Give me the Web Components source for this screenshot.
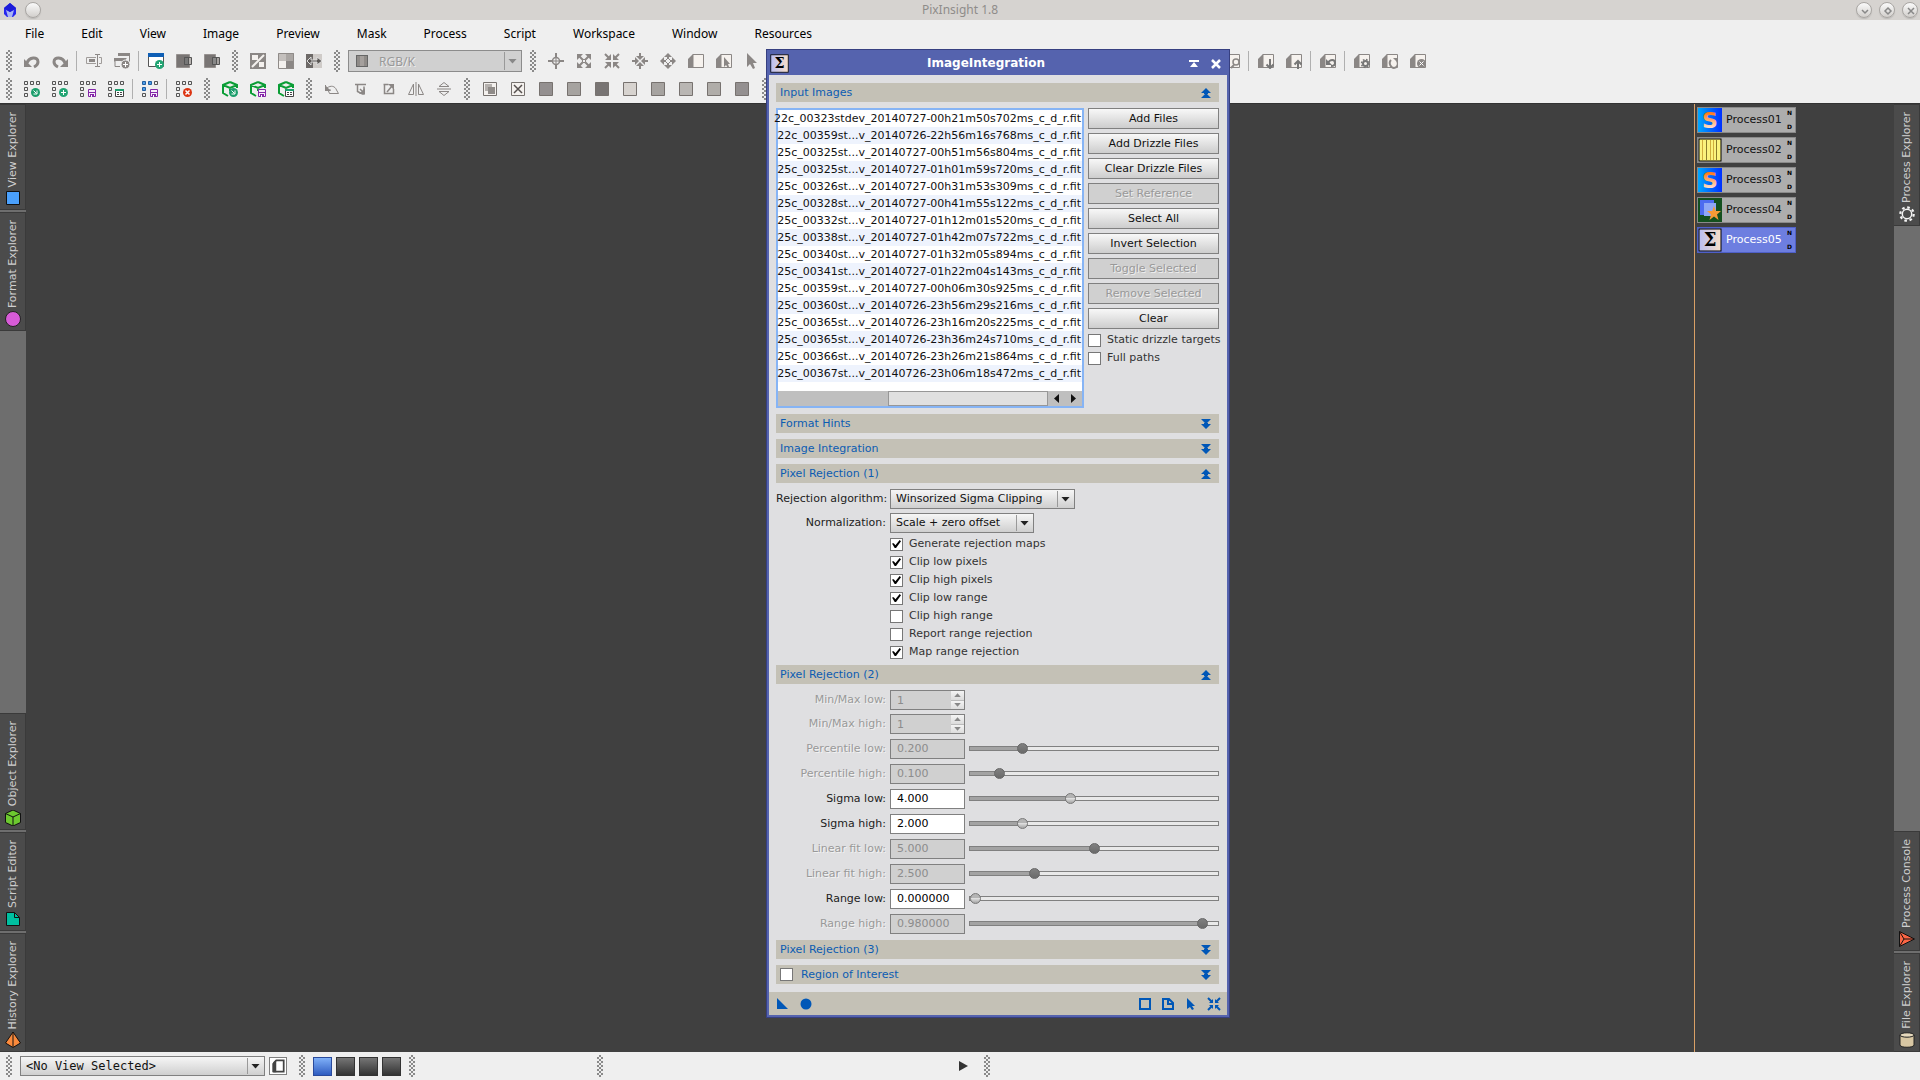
<!DOCTYPE html>
<html lang="en">
<head>
<meta charset="utf-8">
<title>PixInsight 1.8</title>
<style>
  body {
    margin: 0;
    font: 11px/14px "DejaVu Sans", sans-serif;
    color: #111;
    background: #404040;
  }
</style>
</head>
<body>
<pix-app></pix-app>

<script>
const GREY = '#8b8785';

// window with a cut corner, base of the preview tools
const page = `<path d="M5 1.500h10.500v13H5z" fill="#f6f2ee" stroke="${GREY}"/><path d="M0 6 5 1v14H0z" fill="${GREY}"/>`;
// rows of small squares, base of the icon set tools
const grid = (c = '#efefef', s = '#555') => `<g fill="${c}" stroke="${s}">
  <path d="M.5.5h3v3h-3zM6.500.5h3v3h-3zM.5 6.500h3v3h-3z"/></g>
  <g fill="#efefef" stroke="#555"><path d="M12.500.5h3v3h-3zM.5 12.500h3v3h-3z"/></g>`;
const cube = '<path d="M8 1 1 4v8l5 3M8 1l7 3v3M1 4l7 3 7-3M8 7v3" fill="none" stroke="#0a9d35" stroke-width="2"/>';
const badgeGo = '<circle cx="11.500" cy="11.500" r="4.500" fill="#1c9e6c"/><path d="m9.500 9.500 3 3m.5-3v3.500H9.500" stroke="#fff" fill="none"/>';
const badgeAdd = '<circle cx="11.500" cy="11.500" r="4.500" fill="#22a573"/><path d="M11.500 9v5M9 11.500h5" stroke="#fff"/>';
const badgeSave = '<path d="M8.500 8.500h7v7h-7z" fill="#f6eefa" stroke="#8427a8"/><path d="M8 11h8v1H8zM10 13h4v3h-4z" fill="#8427a8"/><path d="M11 14h1v2h-1z" fill="#fff"/>';
const badgeList = '<path d="M7.500 8.500h8v7h-8z" fill="#fff" stroke="#444"/><path d="M7 8h9v2H7z" fill="#1c9e6c"/><path d="M9 11.500h2m1 0h2m-5 2h2m1 0h2" stroke="#444"/>';
const square = c => `<path d="M1.500 1.500h13v13h-13z" fill="${c}" stroke="#77726f"/>`;

const ICONS = {
  undo: `<path d="M3 10C5 4 14 3 14 9c0 3-2 4-4 5" fill="none" stroke="${GREY}" stroke-width="3"/><path d="M0 6v8h8z" fill="${GREY}"/>`,
  redo: `<path d="M13 10C11 4 2 3 2 9c0 3 2 4 4 5" fill="none" stroke="${GREY}" stroke-width="3"/><path d="M16 6v8H8z" fill="${GREY}"/>`,
  rename: `<path d="M10 4.500H.5v6H10M13 4.500h2.500v6H13" fill="none" stroke="#a09c9a"/><path d="M3 6h6v3H3z" fill="${GREY}"/><path d="M9 1.500h2.500v12H9m5-12h-2.500v12H14" fill="none" stroke="${GREY}"/>`,
  dup: `<path d="M4.500.5h11v8M1 7.500v6h5M12.500 5.500h-12v3" fill="none" stroke="${GREY}"/><path d="M4 0h12v3H4zM0 5h12v3H0z" fill="${GREY}"/><circle cx="11.500" cy="11.500" r="4.500" fill="${GREY}" stroke="#efefef"/><path d="M11.500 9v5M9 11.500h5" stroke="#fff"/>`,
  newWin: `<path d="M.5.5h15v13H.5z" fill="#fff" stroke="#555"/><path d="M0 0h16v4H0z" fill="#0f5fb5"/>${badgeAdd}`,
  chanA: `<path d="M.5 1.500h13v13H.5z" fill="#797574" stroke="#96918f"/><path d="M8.500 4.500h7v7h-7z" fill="#b6b2af" stroke="#555"/><path d="M8.500 4.500h4v7h-4z" fill="#777" stroke="#555"/>`,
  chanB: `<path d="M.5 1.500h11v13H.5z" fill="#797574" stroke="#96918f"/><path d="M8.500 4.500h7v7h-7z" fill="#a6a2a0" stroke="#555"/><path d="M8.500 4.500h4v7h-4z" fill="#888" stroke="#555"/>`,
  stf: `<path d="M0 0h16v16H0z" fill="${GREY}"/><path d="M2 2h6v5H2zM9 9h5v5H9z" fill="#f4f1ee"/><path d="m2 14 12-12" stroke="#f4f1ee" stroke-width="2"/>`,
  split: `<path d="M0 0h16v8H0z" fill="#c4c0bd"/><path d="M8 0h8v8H8z" fill="#aaa6a3"/><path d="M0 8h8v8H0z" fill="#f4f1ee"/><path d="M8 8h8v8H8z" fill="${GREY}"/><path d="M.5.5h15v15H.5z" fill="none" stroke="#8f8b88"/>`,
  shift: `<path d="M0 1h7v14H0z" fill="#6d6967"/><path d="M7 1h9v14H7z" fill="#cfcbc8"/><path d="M1 8l4-4v3h6V4l5 4-5 4V9H5v3z" fill="#5b5755" stroke="#ddd"/>`,
  centre: `<path d="M8 0v16M0 8h16" stroke="${GREY}" stroke-width="2"/><circle cx="8" cy="8" r="3.500" fill="#efefef" stroke="${GREY}" stroke-width="1.500"/><path d="M8 5v6M5 8h6" stroke="${GREY}"/>`,
  expand: `<path d="M1 1h6L1 7zM15 1v6L9 1zM1 15V9l6 6zM15 15H9l6-6z" fill="${GREY}"/><path d="m3 3 10 10M13 3 3 13" stroke="${GREY}" stroke-width="2"/><path d="M6.500 6.500h3v3h-3z" fill="#efefef" stroke="${GREY}"/>`,
  shrink: `<path d="M7 7H1l6-6zM9 7V1l6 6zM7 9v6L1 9zM9 9h6l-6 6z" fill="${GREY}"/><path d="m1 1 5 5m4 4 5 5M15 1l-5 5m-4 4-5 5" stroke="${GREY}" stroke-width="2"/>`,
  inward: `<path d="M8 7 4 3h8zM8 9l4 4H4zM7 8l-4 4V4zM9 8l4-4v8z" fill="${GREY}"/><path d="M8 0v4m0 8v4M0 8h4m8 0h4" stroke="${GREY}" stroke-width="2"/>`,
  outward: `<path d="m8 0 4 4H4zM8 16l-4-4h8zM0 8l4-4v8zM16 8l-4 4V4z" fill="${GREY}"/><path d="M8 3v10M3 8h10" stroke="${GREY}" stroke-width="2"/><path d="m8 5 3 3-3 3-3-3z" fill="#efefef" stroke="${GREY}"/>`,
  page,
  pagePick: page + `<path d="M8 4v10l2-2 2 3 1-1-1-3h2z" fill="${GREY}"/>`,
  pointer: `<path d="M3 0v14l3-3 3 5 2-1-2-5h4z" fill="${GREY}"/>`,
  pageZoom: page + `<circle cx="12" cy="9" r="3" fill="#f6f2ee" stroke="${GREY}" stroke-width="1.500"/><path d="m10 12-3 3" stroke="${GREY}" stroke-width="2"/>`,
  pageDown: page + `<path d="M12 6v9M8.500 11.500 12 15l3.500-3.500" fill="none" stroke="#777" stroke-width="2"/>`,
  pageUp: page + `<path d="M12 16V8M8.500 11.500 12 8l3.500 3.500" fill="none" stroke="#777" stroke-width="2"/>`,
  pageUndo: page + `<path d="M8 10c2-4 7-4 7 0 0 2-2 3-4 3" fill="none" stroke="#777" stroke-width="2"/><path d="M6 6v6h6z" fill="#777"/>`,
  pageGear: page + `<circle cx="11.500" cy="10.500" r="2.500" fill="none" stroke="#777" stroke-width="2"/><circle cx="11.500" cy="10.500" r="4" fill="none" stroke="#777" stroke-width="1.500" stroke-dasharray="1.600 1.540"/>`,
  pageLoop: page + `<path d="M9 7c-3 3 0 8 3 8s5-4 3-7" fill="none" stroke="#8b8785" stroke-width="2"/><path d="M11 5h5v5z" fill="${GREY}"/>`,
  pageStop: page + `<circle cx="11.500" cy="10.500" r="4.500" fill="${GREY}"/><path d="m9.500 8.500 4 4m0-4-4 4" stroke="#fff"/>`,
  setGo: grid() + badgeGo,
  setAdd: grid() + badgeAdd,
  setSave: grid() + badgeSave,
  setList: grid() + badgeList,
  setSaveSel: grid('#4a9be8', '#225f9f') + badgeSave,
  setDel: grid() + '<circle cx="11.500" cy="11.500" r="4.500" fill="#dc3412"/><path d="m9.500 9.500 4 4m0-4-4 4" stroke="#fff" stroke-width="1.500"/>',
  cubeGo: cube + badgeGo,
  cubeSave: cube + badgeSave,
  cubeList: cube + badgeList,
  rot180: `<path d="M5.500 12.500h9L12.500 9C11 5 7 4 3 7M1.500 4v5h5l-2 1 1 2.500" fill="none" stroke="${GREY}"/><path d="M1 4v6h6z" fill="${GREY}"/>`,
  rotR: `<path d="M3 3.500h11M5.500 3v7.500l5 2.500h1.500V5.500M8 8l4 4" fill="none" stroke="${GREY}" stroke-width="1.500"/><path d="M13 7v6H7z" fill="${GREY}"/>`,
  rotL: `<path d="M3.500 3.500h5M4.500 3v9.500h9V8" fill="none" stroke="${GREY}" stroke-width="1.500"/><path d="m7 11 5-6" stroke="${GREY}" stroke-width="1.500"/><path d="M8 3h6v6z" fill="${GREY}"/>`,
  flipH: `<path d="M5.500 3v10.500h-5zM10.500 3v10.500h5zM8 1v14" fill="none" stroke="${GREY}"/>`,
  flipV: `<path d="M3 5.500h10l-5-4zM3 10.500h10l-5 4zM1 8h14" fill="none" stroke="${GREY}"/>`,
  maskA: square('#f4f1ee') + '<path d="M3 3h7v7H3z" fill="#b5b1ae"/><path d="M6 6h7v7H6z" fill="#8f8b88"/>',
  maskX: square('#f4f1ee') + '<path d="m4 4 8 8m0-8-8 8" stroke="#55504e" stroke-width="1.500"/>',
  sq1: square('#949090'),
  sq2: square('#a6a3a0'),
  sq3: square('#787473'),
  sq4: square('#d7d3cf'),
  sq5: square('#b9b6b3'),
  sq6: square('#b0ada9'),
  logo: '<path d="m8 1 6 5v6l-3 3H5l-3-3V6z" fill="#2626ee"/><path d="m4 8 4 2 4-2-2 7H6z" fill="#a9b4f5"/><path d="m8 1 6 5-6 4-6-4z" fill="#1a1ad8"/>',
  view: '<path d="M1.500 1.500h13v13h-13z" fill="#4aa0fc" stroke="#111"/>',
  format: '<circle cx="8" cy="8" r="7.500" fill="#d75bd7" stroke="#222"/>',
  object: '<path d="M8 0 15.500 3.500v9L8 16 .5 12.500v-9z" fill="#6cc82f" stroke="#111"/><path d="M.5 3.500 8 7l7.500-3.500M8 7v9" fill="none" stroke="#111"/>',
  script: '<path d="M1.500 1.500h8l5 5v8h-13z" fill="#00bfa0" stroke="#111"/><path d="M9.500 1.500v5h5" fill="none" stroke="#111"/>',
  history: '<path d="M8 0 15.500 11 8 15.500.5 11z" fill="#fb8a3c" stroke="#111"/><path d="M8 0v15" stroke="#111"/>',
  gear: '<circle cx="8" cy="8" r="4.700" fill="none" stroke="#f4f4f4" stroke-width="1.500"/><circle cx="8" cy="8" r="6.700" fill="none" stroke="#f4f4f4" stroke-width="2.200" stroke-dasharray="2.600 2.662"/>',
  console: '<path d="M.5.5 15.500 8 .5 15.500z" fill="#fb6544" stroke="#111"/><path d="M.5.5 5 8 .5 15.500M5 8h10" fill="none" stroke="#111"/>',
  file: '<path d="M1 3v10c0 3 14 3 14 0V3z" fill="#d8c7a3" stroke="#222"/><ellipse cx="8" cy="3" rx="7" ry="2.200" fill="#e6d9bd" stroke="#222"/>',
  folded: '<path d="M3.500 4 6 1.500h8.500v13h-11z" fill="#fff" stroke="#444" stroke-width="2"/><path d="M1.500 5 6 1v14H1.500z" fill="#444"/>',
  up: '<path d="m8 3 5 5H3zM8 8l5 5H3z" fill="#0057b7"/><path d="M6 7h4v2H6z" fill="#0057b7"/>',
  down: '<path d="m8 8 5-5H3zM8 13l5-5H3z" fill="#0057b7"/><path d="M6 7h4v2H6z" fill="#0057b7"/>',
  shade: '<path d="M3 4h10v2H3zM8 6l4 5H4z" fill="#fff"/>',
  close: '<path d="m4 4 8 8m0-8-8 8" stroke="#fff" stroke-width="2.500"/>',
  apply: '<path d="M2 2v11h11z" fill="#0057b7"/>',
  global: '<circle cx="8" cy="8" r="5.500" fill="#0057b7"/>',
  box: '<path d="M3 3h10v10H3z" fill="none" stroke="#0057b7" stroke-width="2"/>',
  doc: '<path d="M3 3h6l4 4v6H3zM8 3v5h5" fill="none" stroke="#0057b7" stroke-width="2"/>',
  arrow: '<path d="M4 2v11l3-2 2 3 2-1-2-3h3z" fill="#0057b7"/>',
  reset: '<path d="M7 7H3l4-4zM9 7V3l4 4zM7 9v4L3 9zM9 9h4l-4 4z" fill="#0057b7"/><path d="m2 2 4 4m4 4 4 4m0-12-4 4m-4 4-4 4" stroke="#0057b7" stroke-width="2"/>',
  play: '<path d="M3 3v10l9-5z" fill="#333"/>',
  winMin: '<path d="m5 7 3 3 3-3" fill="none" stroke="#888" stroke-width="1.500"/>',
  winMax: '<path d="m8 5 3 3-3 3-3-3z" fill="none" stroke="#888" stroke-width="1.500"/>',
  winClose: '<path d="m5 5 6 6m0-6-6 6" stroke="#888" stroke-width="1.500"/>'
};

// artwork of the process icons, 24 units wide
const ART = {
  s: `<defs><linearGradient id="b" x2="1"><stop stop-color="#00a8ff"/><stop offset="1" stop-color="#0030ff"/></linearGradient>
    <linearGradient id="o" x2="0" y2="1"><stop offset=".2" stop-color="#ff7a1a"/><stop offset=".8" stop-color="#ffe0cc"/></linearGradient></defs>
    <rect width="24" height="24" fill="url(#b)"/><text x="12" y="20" text-anchor="middle" font-family="DejaVu Sans" font-weight="bold" font-size="22" fill="url(#o)">S</text>`,
  stripes: '<rect x="1" y="1" width="22" height="22" fill="#fbf27c" stroke="#000"/><path d="M4.500 2v20m8-20v20m3-20v20" stroke="#d0ac3c"/><path d="M8.500 2v20m10-20v20" stroke="#8a7a2c"/>',
  star: '<rect width="24" height="24" fill="#14501f"/><path d="M2 2h14v15H2z" fill="#4d6cf0"/><path d="M6 5h12v13H6z" fill="#8fa8f6"/><path d="m16 8 1.800 5H23l-4 3.500 1.500 5.500-4.500-3.500-4.500 3.500 1.500-5.500L9 13h5.200z" fill="#f79a36"/>',
  sigma: `<defs><linearGradient id="g" x2="1"><stop stop-color="#b9bdf2"/><stop offset="1" stop-color="#f8dfc8"/></linearGradient></defs>
    <rect x="1" y="1" width="22" height="22" fill="url(#g)" stroke="#000"/><text x="12" y="18" text-anchor="middle" font-family="DejaVu Serif" font-weight="bold" font-size="18" fill="#000">Σ</text>`
};

function icon(name, size = 16) {
  return `<svg viewBox="0 0 16 16" width="${size}" height="${size}" aria-hidden="true">${ICONS[name]}</svg>`;
}

function define(name, render) {
  customElements.define(name, class extends HTMLElement {
    constructor() {
      super();
      this.attachShadow({mode: 'open'});
    }
    connectedCallback() {
      const template = document.createElement('template');
      template.innerHTML = render(this);
      this.shadowRoot.replaceChildren(template.content.cloneNode(true));
    }
  });
}

const attr = (el, name) => el.getAttribute(name) || '';

const COMBO = `
  .combo { display: inline-grid; align-items: center; }
  .combo > * { grid-area: 1 / 1; }
  .combo::after {
    content: ""; grid-area: 1 / 1; justify-self: end; pointer-events: none;
    width: 9px; height: 5px; margin-right: 5px; background: #222;
    clip-path: polygon(0 0, 100% 0, 50% 100%);
  }
  select {
    appearance: none; box-sizing: border-box; width: 100%; height: 20px; margin: 0; padding: 0 22px 0 5px;
    border: 1px solid #808080; border-radius: 0; font: inherit; color: #111;
    background: linear-gradient(#999, #999) right 16px center / 1px 16px no-repeat,
      linear-gradient(#f6f6f6, #cfcfcf);
  }`;

define('title-bar', () => `
  <style>
    :host { display: grid; grid-template-columns: 1fr auto 1fr; align-items: center; height: 20px; padding: 0 2px; background: #d6d3d0; }
    div { display: flex; align-items: center; gap: 7px; }
    div:last-child { justify-content: flex-end; }
    h1 { margin: 0; font: 12px/20px "Noto Sans", sans-serif; color: #8f8c8a; }
    button {
      display: grid; place-items: center; box-sizing: border-box; width: 16px; height: 16px; padding: 0;
      border: 1px solid #a9a6a3; border-radius: 50%; background: linear-gradient(#fafafa, #d2cfcc); box-shadow: 0 1px 1px #8885;
    }
  </style>
  <div>${icon('logo')}<button aria-label="Window menu"></button></div>
  <h1>PixInsight 1.8</h1>
  <div>
    <button aria-label="Minimize">${icon('winMin')}</button>
    <button aria-label="Maximize">${icon('winMax')}</button>
    <button aria-label="Close">${icon('winClose')}</button>
  </div>`);

define('menu-bar', () => `
  <style>
    :host { display: block; height: 27px; background: #efefef; }
    nav { display: flex; gap: 37px; padding-left: 25px; }
    a { font: 12px/27px "Noto Sans", sans-serif; color: #000; text-decoration: none; }
  </style>
  <nav>${['File', 'Edit', 'View', 'Image', 'Preview', 'Mask', 'Process', 'Script', 'Workspace', 'Window', 'Resources']
    .map(m => `<a href="#">${m}</a>`).join('')}</nav>`);

define('grip-handle', () => `
  <style>
    :host { display: grid; place-items: center; flex: none; width: 18px; height: 28px; }
    i {
      width: 6px; height: 22px;
      background: conic-gradient(#8a8a8a 25%, transparent 0 50%, #8a8a8a 0 75%, transparent 0) 0 0 / 4px 4px;
    }
  </style><i></i>`);

// items: icon names, "|" for a separator, "#" for a grip, "combo" for the channel list
define('tool-bar', el => `
  <style>
    ${COMBO}
    :host { display: flex; align-items: center; height: 28px; overflow: hidden; background: #efefef; }
    button { display: grid; place-items: center; flex: none; width: 28px; height: 28px; padding: 0; border: 0; background: none; }
    hr { flex: none; width: 1px; height: 20px; margin: 0 3px 0 2px; border: 0; background: #b0b0b0; }
    .combo { flex: none; width: 174px; margin: 0 2px; }
    .combo select {
      height: 22px; padding-left: 30px; font: 12px "Noto Sans", sans-serif; color: #999; opacity: 1; border-color: #8c8c8c;
      text-shadow: 1px 1px #eee;
      background: linear-gradient(#999, #999) right 16px center / 1px 18px no-repeat, #d0d0d0;
    }
    .combo::after { background: #888; }
    .swatch { z-index: 1; width: 10px; height: 10px; margin-left: 8px; border: 1px solid #666; background: linear-gradient(90deg, #8f8b88 30%, #a5a09d 30% 70%, #8f8b88 70%); }
  </style>
  ${attr(el, 'items').split(/\s+/).map(name => {
    if (name === '|') return '<hr>';
    if (name === '#') return '<grip-handle></grip-handle>';
    if (name === 'combo') {
      return '<div class="combo"><select disabled aria-label="Channel"><option>RGB/K</option></select><span class="swatch"></span></div>';
    }
    return `<button aria-label="${name}">${icon(name)}</button>`;
  }).join('')}`);

define('dock-tab', el => `
  <style>
    :host { display: block; border: solid #3a3a3a; border-width: 1px 1px 1px 0; background: #4b4b4b; }
    button {
      display: flex; flex-direction: column; align-items: center; gap: 3px; width: 100%; padding: 7px 0 3px;
      border: 0; background: none; font: inherit; color: #cfcfcf;
    }
    span { writing-mode: vertical-rl; transform: rotate(180deg); line-height: 16px; }
  </style>
  <button><span><slot></slot></span>${icon(attr(el, 'icon'))}</button>`);

define('dock-rail', () => `
  <style>
    :host { display: flex; flex-direction: column; justify-content: space-between; flex: none; width: 26px; background: #6e6e6e; }
    div { display: flex; flex-direction: column; gap: 2px; }
  </style>
  <div><slot name="top"></slot></div>
  <div><slot></slot></div>`);

define('process-icon', el => `
  <style>
    :host { display: block; width: 99px; }
    button {
      display: flex; align-items: center; width: 100%; height: 26px; padding: 0 3px 0 0; border: 1px solid #8a8a8a;
      background: #adadad; font: inherit; color: #111;
    }
    :host([selected]) button { border-color: #4f60c8; background: #6d7ee0; color: #fff; }
    span { flex: 1; text-align: left; padding-left: 4px; line-height: 24px; }
    small { display: grid; gap: 6px; font: bold 6px/8px "DejaVu Sans", sans-serif; color: #000; }
  </style>
  <button><svg viewBox="0 0 24 24" width="24" height="24">${ART[attr(el, 'art')]}</svg>
  <span><slot></slot></span><small><b>N</b><b>D</b></small></button>`);

define('check-item', el => `
  <style>
    :host { display: block; color: #333; }
    label { display: flex; align-items: center; gap: 6px; height: 14px; white-space: nowrap; }
    input {
      appearance: none; display: grid; place-items: center; box-sizing: border-box; flex: none;
      width: 13px; height: 13px; margin: 0; border: 1px solid #777; background: #fff;
    }
    input:checked::before {
      content: ""; width: 9px; height: 8px; background: #000;
      clip-path: polygon(0 45%, 20% 40%, 38% 65%, 85% 0, 100% 15%, 45% 100%, 30% 100%);
    }
  </style>
  <label><input type="checkbox" ${el.hasAttribute('checked') ? 'checked' : ''}><span><slot></slot></span></label>`);

define('push-button', el => `
  <style>
    :host { display: block; }
    button {
      display: block; width: 100%; height: 21px; padding: 0; border: 1px solid #808080;
      background: linear-gradient(#f8f8f8, #cdcdcd); font: inherit; color: #111;
    }
    button:disabled { background: #d0d0d0; color: #999; text-shadow: 1px 1px #eee; }
  </style>
  <button ${el.hasAttribute('disabled') ? 'disabled' : ''}><slot></slot></button>`);

define('dialog-section', el => `
  <style>
    :host { display: flex; flex-direction: column; gap: 6px; }
    header { display: flex; align-items: center; height: 19px; padding: 0 5px 0 4px; background: #c4c1b6; color: #0c5cb2; }
    h2 { flex: 1; margin: 0; font: inherit; }
    check-item { flex: 1; }
    check-item span { color: #0c5cb2; padding-left: 2px; }
    button { display: grid; padding: 0; border: 0; background: none; }
    .body { display: flex; flex-direction: column; gap: 4px; }
    :host(:not([open])) .body { display: none; }
  </style>
  <header>${el.hasAttribute('checkable')
    ? `<check-item><span>${attr(el, 'heading')}</span></check-item>`
    : `<h2>${attr(el, 'heading')}</h2>`}
  <button aria-label="Toggle ${attr(el, 'heading')}">${icon(el.hasAttribute('open') ? 'up' : 'down')}</button></header>
  <div class="body"><slot></slot></div>`);

// labelled value: type is combo, spin or edit; edit rows carry a slider
define('param-row', el => {
  const off = el.hasAttribute('disabled') ? 'disabled' : '';
  const type = attr(el, 'type');
  const label = attr(el, 'label');
  const value = attr(el, 'value');
  let field;
  if (type === 'combo') {
    field = `<div class="combo"><select id="f"><option>${value}</option></select></div>`;
  } else if (type === 'spin') {
    field = `<div class="spin"><input id="f" type="number" value="${value}" ${off}><span><i></i><i></i></span></div>`;
  } else {
    field = `<input id="f" type="text" value="${value}" ${off}>
      <input class="slider" type="range" aria-label="${label}" min="0" max="1000" value="${attr(el, 'pos')}" style="--pos: ${attr(el, 'pos') / 10}%" ${off}>`;
  }
  return `
  <style>
    ${COMBO}
    :host { display: flex; align-items: center; gap: 4px; min-height: 20px; }
    :host([type=edit]) { min-height: 21px; }
    label { flex: none; width: 110px; text-align: right; white-space: nowrap; color: #222; }
    :host([disabled]) label { color: #999; text-shadow: 1px 1px #f2f2f2; }
    .combo { width: var(--field, auto); }
    input[type=text], input[type=number] {
      appearance: textfield; box-sizing: border-box; flex: none; width: 75px; height: 20px; margin: 0; padding: 0 6px;
      border: 1px solid #808080; background: #fff; font: inherit; color: #000;
    }
    input::-webkit-inner-spin-button { appearance: none; margin: 0; }
    input[type=text]:disabled, input[type=number]:disabled { background: #d0d0d0; color: #8c8c8c; }
    .spin { display: grid; }
    .spin > * { grid-area: 1 / 1; }
    .spin span { justify-self: end; display: grid; gap: 1px; width: 13px; margin: 1px; background: #bbb; }
    .spin i { display: grid; place-items: center; background: linear-gradient(#f4f4f4, #dcdcdc); }
    .spin i::before { content: ""; width: 7px; height: 4px; background: #888; clip-path: polygon(50% 0, 100% 100%, 0 100%); }
    .spin i + i::before { clip-path: polygon(0 0, 100% 0, 50% 100%); }
    .slider { appearance: none; flex: 1; min-width: 0; height: 12px; margin: 0; background: none; }
    .slider::-webkit-slider-runnable-track {
      box-sizing: border-box; height: 5px; border: 1px solid #808080;
      background: linear-gradient(90deg, #a3a3a3 var(--pos), #e9e9e9 var(--pos));
    }
    .slider::-webkit-slider-thumb {
      appearance: none; box-sizing: border-box; width: 11px; height: 11px; margin-top: -4px;
      border: 1px solid #777; border-radius: 50%; background: linear-gradient(#b4b4b4 45%, #dedede 50%, #a4a4a4);
    }
    .slider:disabled::-webkit-slider-thumb { border-color: #666; background: linear-gradient(#808080, #6a6a6a); }
  </style>
  <label for="f">${label}</label>${field}`;
});

const FILES = [
  '22c_00323stdev_20140727-00h21m50s702ms_c_d_r.fit',
  '22c_00359st...v_20140726-22h56m16s768ms_c_d_r.fit',
  '25c_00325st...v_20140727-00h51m56s804ms_c_d_r.fit',
  '25c_00325st...v_20140727-01h01m59s720ms_c_d_r.fit',
  '25c_00326st...v_20140727-00h31m53s309ms_c_d_r.fit',
  '25c_00328st...v_20140727-00h41m55s122ms_c_d_r.fit',
  '25c_00332st...v_20140727-01h12m01s520ms_c_d_r.fit',
  '25c_00338st...v_20140727-01h42m07s722ms_c_d_r.fit',
  '25c_00340st...v_20140727-01h32m05s894ms_c_d_r.fit',
  '25c_00341st...v_20140727-01h22m04s143ms_c_d_r.fit',
  '25c_00359st...v_20140727-00h06m30s925ms_c_d_r.fit',
  '25c_00360st...v_20140726-23h56m29s216ms_c_d_r.fit',
  '25c_00365st...v_20140726-23h16m20s225ms_c_d_r.fit',
  '25c_00365st...v_20140726-23h36m24s710ms_c_d_r.fit',
  '25c_00366st...v_20140726-23h26m21s864ms_c_d_r.fit',
  '25c_00367st...v_20140726-23h06m18s472ms_c_d_r.fit'
];

define('file-list', () => `
  <style>
    :host { display: flex; flex-direction: column; flex: 1; min-width: 0; border: 2px solid #86b4f5; background: #fff; }
    ul { flex: 1; margin: 0; padding: 0 0 9px; list-style: none; }
    li { display: flex; justify-content: flex-end; padding-right: 1px; line-height: 17px; white-space: nowrap; }
    li:nth-child(even) { background: #eef3fd; }
    .bar { display: flex; align-items: center; height: 15px; background: #bfbfbf; }
    .rail { display: flex; flex: 1; height: 100%; padding-left: 110px; }
    .thumb { flex: 1; border: 1px solid #979797; background: #e0e0e0; }
    .bar button { width: 17px; height: 15px; padding: 0; border: 0; background: none; display: grid; place-items: center; }
    .bar button::before { content: ""; width: 5px; height: 9px; background: #111; clip-path: polygon(0 50%, 100% 0, 100% 100%); }
    .bar button + button::before { clip-path: polygon(0 0, 100% 50%, 0 100%); }
  </style>
  <ul>${FILES.map(f => `<li>${f}</li>`).join('')}</ul>
  <div class="bar"><div class="rail"><div class="thumb"></div></div>
    <button aria-label="Scroll left"></button><button aria-label="Scroll right"></button></div>`);

define('process-dialog', () => `
  <style>
    :host { display: block; border: 2px solid #5563ae; outline: 1px solid #363f80; background: #dfdfe1; }
    .title { display: flex; align-items: center; height: 23px; padding-left: 1px; background: #5563ae; }
    .title svg { flex: none; }
    h1 { flex: 1; margin: 0; text-align: center; font: bold 12px/23px "DejaVu Sans", sans-serif; color: #fff; }
    button { display: grid; place-items: center; width: 22px; height: 22px; padding: 0; border: 0; background: none; }
    .sections { display: flex; flex-direction: column; gap: 6px; padding: 8px 8px 8px 7px; }
    .input { display: flex; gap: 4px; }
    .side { display: flex; flex-direction: column; gap: 4px; flex: none; width: 131px; }
    .checks { display: flex; flex-direction: column; gap: 4px; padding-left: 114px; }
    footer { display: flex; align-items: center; height: 23px; padding: 0 2px; background: #c4c1b6; }
    footer button { width: 23px; }
    footer button:nth-child(2) { margin-right: auto; }
  </style>
  <div class="title">
    <svg viewBox="0 0 24 24" width="19" height="19">${ART.sigma}</svg>
    <h1>ImageIntegration</h1>
    <button aria-label="Shade">${icon('shade')}</button>
    <button aria-label="Close">${icon('close')}</button>
  </div>
  <div class="sections">
    <dialog-section heading="Input Images" open>
      <div class="input">
        <file-list></file-list>
        <div class="side">
          <push-button>Add Files</push-button>
          <push-button>Add Drizzle Files</push-button>
          <push-button>Clear Drizzle Files</push-button>
          <push-button disabled>Set Reference</push-button>
          <push-button>Select All</push-button>
          <push-button>Invert Selection</push-button>
          <push-button disabled>Toggle Selected</push-button>
          <push-button disabled>Remove Selected</push-button>
          <push-button>Clear</push-button>
          <check-item>Static drizzle targets</check-item>
          <check-item>Full paths</check-item>
        </div>
      </div>
    </dialog-section>
    <dialog-section heading="Format Hints"></dialog-section>
    <dialog-section heading="Image Integration"></dialog-section>
    <dialog-section heading="Pixel Rejection (1)" open>
      <param-row type="combo" label="Rejection algorithm:" value="Winsorized Sigma Clipping" style="--field: 185px"></param-row>
      <param-row type="combo" label="Normalization:" value="Scale + zero offset" style="--field: 144px"></param-row>
      <div class="checks">
        <check-item checked>Generate rejection maps</check-item>
        <check-item checked>Clip low pixels</check-item>
        <check-item checked>Clip high pixels</check-item>
        <check-item checked>Clip low range</check-item>
        <check-item>Clip high range</check-item>
        <check-item>Report range rejection</check-item>
        <check-item checked>Map range rejection</check-item>
      </div>
    </dialog-section>
    <dialog-section heading="Pixel Rejection (2)" open>
      <param-row type="spin" label="Min/Max low:" value="1" disabled></param-row>
      <param-row type="spin" label="Min/Max high:" value="1" disabled></param-row>
      <param-row type="edit" label="Percentile low:" value="0.200" pos="200" disabled></param-row>
      <param-row type="edit" label="Percentile high:" value="0.100" pos="100" disabled></param-row>
      <param-row type="edit" label="Sigma low:" value="4.000" pos="400"></param-row>
      <param-row type="edit" label="Sigma high:" value="2.000" pos="200"></param-row>
      <param-row type="edit" label="Linear fit low:" value="5.000" pos="500" disabled></param-row>
      <param-row type="edit" label="Linear fit high:" value="2.500" pos="250" disabled></param-row>
      <param-row type="edit" label="Range low:" value="0.000000" pos="0"></param-row>
      <param-row type="edit" label="Range high:" value="0.980000" pos="957" disabled></param-row>
    </dialog-section>
    <dialog-section heading="Pixel Rejection (3)"></dialog-section>
    <dialog-section heading="Region of Interest" checkable></dialog-section>
  </div>
  <footer>
    <button aria-label="New instance">${icon('apply')}</button>
    <button aria-label="Apply global">${icon('global')}</button>
    <button aria-label="Track view">${icon('box')}</button>
    <button aria-label="Edit script">${icon('doc')}</button>
    <button aria-label="Browse documentation">${icon('arrow')}</button>
    <button aria-label="Reset">${icon('reset')}</button>
  </footer>`);

define('status-bar', () => `
  <style>
    ${COMBO}
    :host { display: flex; align-items: center; height: 28px; background: #efefef; }
    .combo { width: 245px; margin: 0 4px 0 2px; }
    select { font: 12px "DejaVu Sans Mono", monospace; }
    .view { display: grid; place-items: center; box-sizing: border-box; width: 18px; height: 18px; margin-right: 6px; padding: 0; border: 1px solid #808080; background: #fff; }
    .spaces { display: flex; gap: 4px; padding: 0 2px; }
    .spaces button { box-sizing: border-box; width: 19px; height: 19px; padding: 0; border: 1px solid #333; background: linear-gradient(#757575, #333); }
    .spaces .on { border-color: #2a4a9c; background: linear-gradient(#7fb0f8, #2f5cc0); }
    .a { flex: 170; }
    .b { flex: 369; display: flex; justify-content: flex-end; }
    .b button { padding: 0; border: 0; margin-right: 6px; background: none; display: grid; }
    .c { flex: 924; }
  </style>
  <grip-handle></grip-handle>
  <div class="combo"><select aria-label="View"><option>&lt;No View Selected&gt;</option></select></div>
  <button class="view" aria-label="Mask">${icon('folded', 14)}</button>
  <grip-handle></grip-handle>
  <div class="spaces"><button class="on" aria-label="Workspace 1"></button><button aria-label="Workspace 2"></button><button aria-label="Workspace 3"></button><button aria-label="Workspace 4"></button></div>
  <grip-handle></grip-handle><div class="a"></div>
  <grip-handle></grip-handle><div class="b"><button aria-label="Run">${icon('play')}</button></div>
  <grip-handle></grip-handle><div class="c"></div>`);

define('pix-app', () => `
  <style>
    :host { display: flex; flex-direction: column; position: relative; min-height: 100vh; }
    main { display: flex; flex: 1; background: #404040; border-top: 1px solid #333; box-sizing: border-box; }
    .canvas { flex: 1; }
    .icons { display: flex; flex-direction: column; gap: 4px; box-sizing: border-box; width: 200px; padding: 3px 2px; border-left: 1px solid #d9a066; }
    process-dialog { position: absolute; left: 767px; top: 50px; width: 458px; }
  </style>
  <title-bar></title-bar>
  <menu-bar></menu-bar>
  <tool-bar items="# undo redo | rename dup | newWin chanA chanB # stf split shift # combo # centre expand shrink inward outward page pagePick pointer # page page page | page page page page # page page page | page page | page | page pageZoom | pageDown pageUp | pageUndo | pageGear pageLoop pageStop"></tool-bar>
  <tool-bar items="# setGo setAdd setSave setList | setSaveSel | setDel # cubeGo cubeSave cubeList # rot180 rotR rotL flipH flipV # maskA maskX sq1 sq2 sq3 sq4 sq2 sq5 sq6 sq1 #"></tool-bar>
  <main>
    <dock-rail>
      <dock-tab slot="top" icon="view">View Explorer</dock-tab>
      <dock-tab slot="top" icon="format">Format Explorer</dock-tab>
      <dock-tab icon="object">Object Explorer</dock-tab>
      <dock-tab icon="script">Script Editor</dock-tab>
      <dock-tab icon="history">History Explorer</dock-tab>
    </dock-rail>
    <div class="canvas"></div>
    <div class="icons">
      <process-icon art="s">Process01</process-icon>
      <process-icon art="stripes">Process02</process-icon>
      <process-icon art="s">Process03</process-icon>
      <process-icon art="star">Process04</process-icon>
      <process-icon art="sigma" selected>Process05</process-icon>
    </div>
    <dock-rail>
      <dock-tab slot="top" icon="gear">Process Explorer</dock-tab>
      <dock-tab icon="console">Process Console</dock-tab>
      <dock-tab icon="file">File Explorer</dock-tab>
    </dock-rail>
  </main>
  <status-bar></status-bar>
  <process-dialog></process-dialog>`);
</script>
</body>
</html>
